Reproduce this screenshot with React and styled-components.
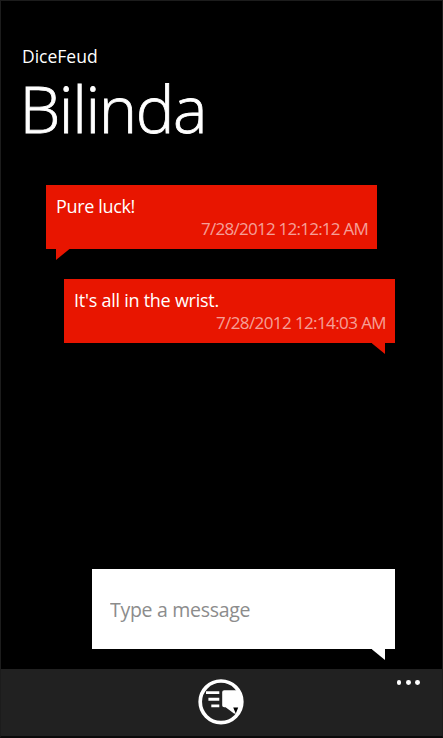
import styled, { createGlobalStyle } from 'styled-components';

const messages = [
  { id: 1, text: 'Pure luck!', date: '7/28/2012 12:12:12 AM', mine: false },
  { id: 2, text: "It's all in the wrist.", date: '7/28/2012 12:14:03 AM', mine: true },
];

const App = () => (
  <>
    <GlobalStyle />
    <Phone>
      <Header>
        <AppName>DiceFeud</AppName>
        <Title>Bilinda</Title>
      </Header>
      <Conversation>
        {messages.map(({ id, text, date, mine }) => (
          <Bubble key={id} $mine={mine}>
            <MessageText $mine={mine}>{text}</MessageText>
            <MessageDate $mine={mine}>{date}</MessageDate>
          </Bubble>
        ))}
      </Conversation>
      <Composer>
        <Input placeholder="Type a message" />
      </Composer>
      <AppBar>
        <SendButton aria-label="send">
          <SendIcon />
        </SendButton>
        <MoreButton aria-label="more">
          <Dot />
          <Dot />
          <Dot />
        </MoreButton>
      </AppBar>
    </Phone>
  </>
);

const SendIcon = () => (
  <svg width="46" height="46" viewBox="0 0 46 46">
    <circle cx="23" cy="22.8" r="20.8" fill="none" stroke="#fff" strokeWidth="3.7" />
    <path d="M8 13.6h13.3M10.4 20.3h10.9M13.3 26.9h8" stroke="#fff" strokeWidth="2.9" />
    <path
      d="M26.2 11.3H41L43 20V29L39.5 35L36 34.6L27.6 28.2H26.2Q24.2 28.2 24.2 26.4V13.1Q24.2 11.3 26.2 11.3Z"
      fill="#fff"
    />
    <path d="M35.2 28.4H40.2L37.8 34.4Z" fill="#000" />
  </svg>
);

const GlobalStyle = createGlobalStyle`
  body {
    margin: 0;
    background-color: #000;
  }

  * {
    box-sizing: border-box;
  }
`;

const Phone = styled.div`
  display: flex;
  flex-direction: column;
  width: 443px;
  height: 738px;
  overflow: hidden;
  border: 1px solid #1c1c1c;
  border-bottom: 2px solid #0a0a0a;
  background-color: #000;
  color: #fff;
  font-family: 'Open Sans', 'Noto Sans', sans-serif;
`;

const Header = styled.header`
  height: 183px;
  padding: 43px 0 0 21px;
`;

const AppName = styled.div`
  font-size: 17.5px;
  line-height: 24px;
  letter-spacing: 0;
`;

const Title = styled.h1`
  margin: 7px 0 0 -2.5px;
  font-size: 65px;
  font-weight: 300;
  line-height: 66px;
  letter-spacing: -1.4px;
  -webkit-text-stroke: 0.8px #fff;
`;

const Conversation = styled.main`
  display: flex;
  flex: 1;
  flex-direction: column;
  gap: 29.5px;
  padding: 0.5px 47px 0 45px;
`;

const Bubble = styled.div`
  position: relative;
  display: flex;
  flex-direction: column;
  align-self: ${({ $mine }) => ($mine ? 'flex-end' : 'flex-start')};
  width: 331px;
  height: 64.5px;
  padding: 9px 9px 0 10px;
  background-color: #e81500;

  &::after {
    content: '';
    position: absolute;
    top: 100%;
    ${({ $mine }) => ($mine ? 'right' : 'left')}: 10px;
    width: 13.5px;
    height: 11px;
    background-color: inherit;
    clip-path: ${({ $mine }) =>
      $mine ? 'polygon(0 0, 100% 0, 100% 100%)' : 'polygon(0 0, 100% 0, 0 100%)'};
  }
`;

const MessageText = styled.div`
  font-size: 18px;
  line-height: 24px;
  letter-spacing: ${({ $mine }) => ($mine ? '-0.25px' : '-0.35px')};
`;

const MessageDate = styled.div`
  align-self: flex-end;
  color: rgba(255, 255, 255, 0.6);
  font-size: 17px;
  line-height: 22px;
  letter-spacing: ${({ $mine }) => ($mine ? '-0.6px' : '-0.75px')};
`;

const Composer = styled.div`
  position: relative;
  align-self: flex-end;
  width: 303px;
  height: 80px;
  margin: 0 47px 20px 0;
  background-color: #fff;

  &::after {
    content: '';
    position: absolute;
    top: 100%;
    right: 10px;
    width: 13.5px;
    height: 11px;
    background-color: #fff;
    clip-path: polygon(0 0, 100% 0, 100% 100%);
  }
`;

const Input = styled.input`
  width: 100%;
  height: 100%;
  border: 0;
  outline: 0;
  padding: 0 18px;
  background-color: transparent;
  color: #000;
  font-family: inherit;
  font-size: 19.5px;
  letter-spacing: -0.3px;

  &::placeholder {
    color: #8c8c8c;
    opacity: 1;
  }
`;

const AppBar = styled.footer`
  display: grid;
  grid-template-columns: 1fr 46px 1fr;
  height: 67px;
  padding: 10px 1px 0 0;
  background-color: #212121;
`;

const SendButton = styled.button`
  grid-column: 2;
  width: 46px;
  height: 46px;
  border: 0;
  padding: 0;
  background: none;

  svg {
    display: block;
  }
`;

const MoreButton = styled.button`
  display: flex;
  justify-self: end;
  align-items: flex-start;
  gap: 4.5px;
  height: 20px;
  margin-right: 21px;
  border: 0;
  padding: 1px 0 0;
  background: none;
`;

const Dot = styled.span`
  width: 4.8px;
  height: 4.8px;
  border-radius: 50%;
  background-color: #fff;
`;

export default App;
